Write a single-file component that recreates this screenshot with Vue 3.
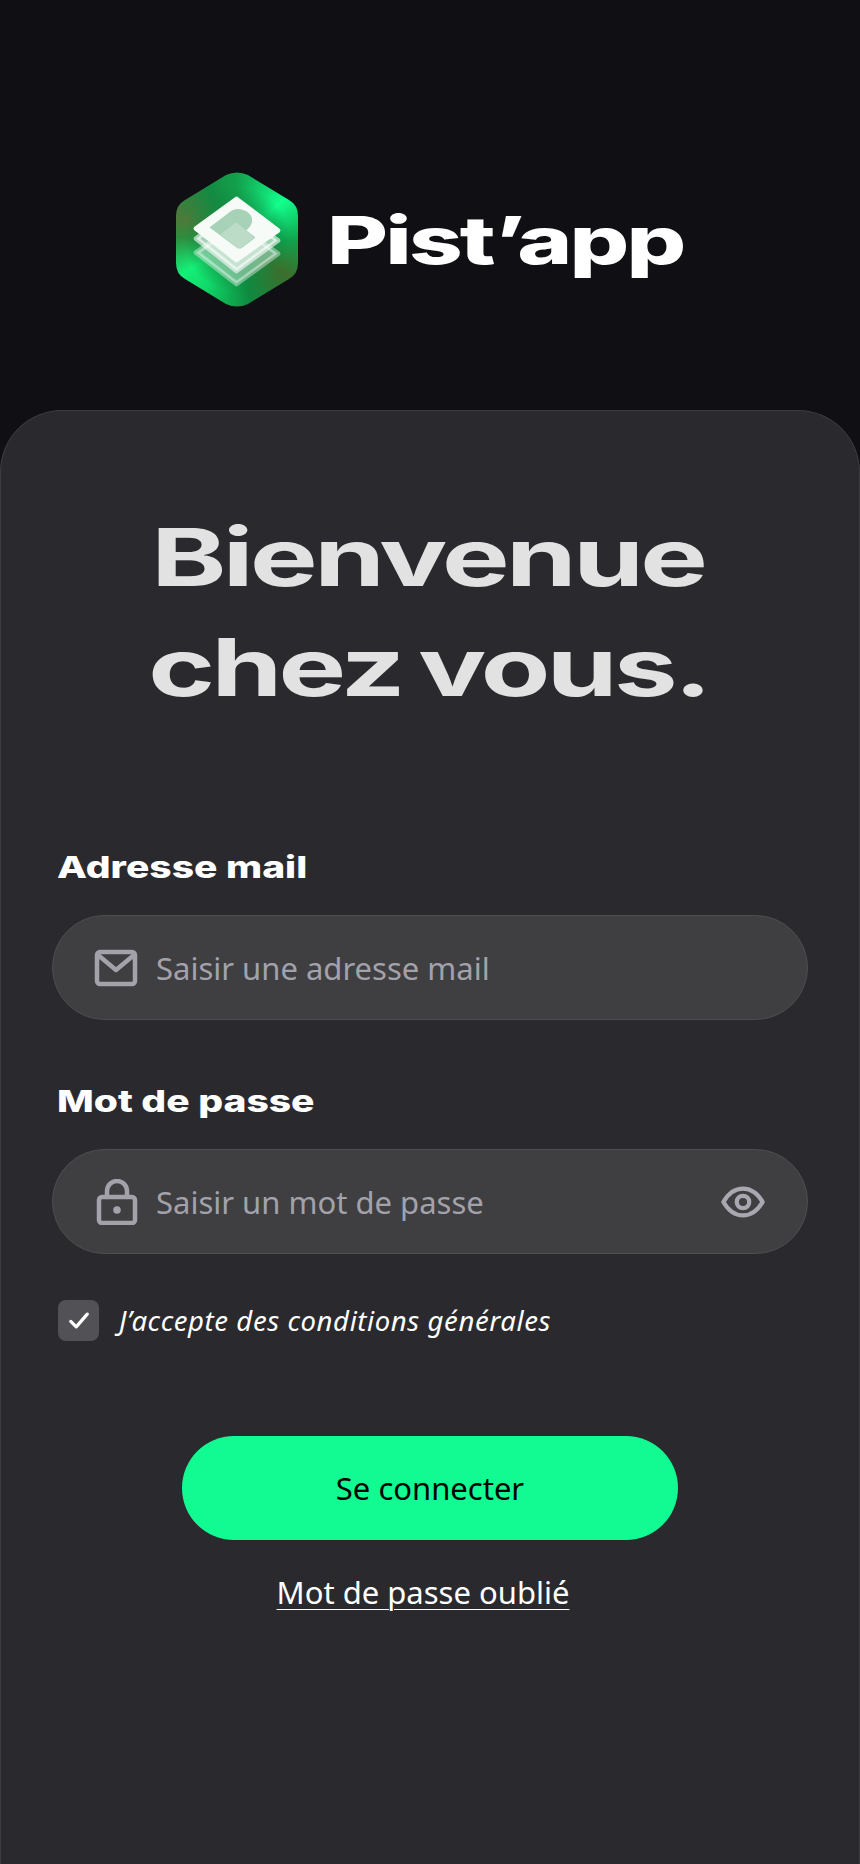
<script setup>
import { ref } from 'vue';

const email = ref('');
const password = ref('');
const accepted = ref(true);
</script>

<template>
  <div class="page">
    <header class="brand">
      <div class="logo">
        <div class="logo-hex"></div>
        <svg class="logo-layers" width="122" height="135" viewBox="0 0 121 134">
          <path d="M20 80 L60 111 L101 81 L60 52 Z" fill="#fff" fill-opacity=".4" stroke="#fff" stroke-opacity=".4" stroke-width="5" stroke-linejoin="round" />
          <path d="M20 66 L60 98 L101 68 L60 38 Z" fill="#fff" fill-opacity=".6" stroke="#fff" stroke-opacity=".6" stroke-width="5" stroke-linejoin="round" />
          <path d="M20 56 L60 27 L101 58 L60 87 Z" fill="#f7fbf8" stroke="#f7fbf8" stroke-width="5" stroke-linejoin="round" />
          <path d="M34 55 L55 39 Q60 36 66 38 Q75 41 75 48 Q75 53 69 58 L78 65 L65 75 Q63 76 61 75 Z" fill="#a8d2b7" stroke="#a8d2b7" stroke-width="1" stroke-linejoin="round" />
          <path d="M44 62 L60 50 L78 65 L65 75 Q63 76 61 75 Z" fill="#bcdcc7" />
        </svg>
      </div>
      <span class="brand-name">Pist’app</span>
    </header>

    <main class="card">
      <h1 class="title">
        <span>Bienvenue</span>
        <span>chez vous.</span>
      </h1>

      <form class="form" @submit.prevent>
        <div class="field">
          <label class="label" for="email"><span>Adresse mail</span></label>
          <div class="input-wrap">
            <svg class="icon" width="44" height="38" viewBox="0 0 44 38" fill="none" stroke="#a3a2ab" stroke-width="4.500" stroke-linecap="round" stroke-linejoin="round">
              <rect x="3" y="3" width="38" height="32" rx="3" />
              <path d="M4 6 L22 21 L40 6" />
            </svg>
            <input class="mail-input" id="email" v-model="email" type="email" placeholder="Saisir une adresse mail" />
          </div>
        </div>

        <div class="field field-pass">
          <label class="label" for="password"><span>Mot de passe</span></label>
          <div class="input-wrap">
            <svg class="icon" width="46" height="46" viewBox="0 0 46 46" fill="none" stroke="#a3a2ab" stroke-width="4.500" stroke-linecap="round" stroke-linejoin="round">
              <rect x="5" y="18" width="36" height="26" rx="3" />
              <path d="M13 18 V12 A10 10 0 0 1 33 12 V18" />
              <circle cx="23" cy="31" r="3.800" fill="#a3a2ab" stroke="none" />
            </svg>
            <input id="password" v-model="password" type="password" placeholder="Saisir un mot de passe" />
            <svg class="eye" width="44" height="34" viewBox="0 0 46 34" fill="none" stroke="#a9a8b0" stroke-width="4.500" stroke-linejoin="round">
              <path d="M2.500 17 C8 7.500 15 3 23 3 C31 3 38 7.500 43.500 17 C38 26.500 31 31 23 31 C15 31 8 26.500 2.500 17 Z" />
              <circle cx="23" cy="17" r="6.500" />
            </svg>
          </div>
        </div>

        <div class="terms" @click="accepted = !accepted">
          <span class="check">
            <svg v-if="accepted" width="22" height="19" viewBox="0 0 24 20" fill="none" stroke="#fff" stroke-width="3.500" stroke-linecap="round" stroke-linejoin="round">
              <path d="M3 11 L9 17 L21 3" />
            </svg>
          </span>
          <span class="terms-text">J’accepte des conditions générales</span>
        </div>

        <div class="actions">
          <button class="submit" type="submit">Se connecter</button>
          <a class="forgot" href="#">Mot de passe oublié</a>
        </div>
      </form>
    </main>
  </div>
</template>

<style>
html,
body {
  margin: 0;
  background: #0f0f14;
}
</style>

<style scoped>
.page {
  height: 1864px;
  display: flex;
  flex-direction: column;
  overflow: hidden;
  background: #0f0f14;
  font-family: "Noto Sans", Lato, sans-serif;
  color: #fff;
}

.brand {
  height: 410px;
  box-sizing: border-box;
  padding: 172px 0 0 176px;
  display: flex;
  align-items: flex-start;
}

.logo {
  display: grid;
  width: 122px;
  height: 135px;
}

.logo-hex,
.logo-layers {
  grid-area: 1 / 1;
}

.logo-layers {
  z-index: 1;
}

.logo-hex {
  width: 122px;
  height: 135px;
  background:
    radial-gradient(circle at 50% 50%, #128a42 0%, #128a42 24%, rgba(16, 130, 60, 0) 58%),
    conic-gradient(from 0deg at 50% 50%, #13a04c 0deg, #12ff8c 50deg, #10a04c 92deg, #3d6e2c 125deg, #0f8a40 168deg, #10d868 212deg, #14f078 238deg, #2f8c3f 272deg, #4c7a3a 290deg, #148a42 330deg, #13a04c 360deg);
  clip-path: path("M50 3 Q61 -2 72 3 L113 28 Q122 33 122 44 L122 91 Q122 102 113 107 L72 132 Q61 137 50 132 L9 107 Q0 102 0 91 L0 44 Q0 33 9 28 Z");
}

.brand-name {
  margin: 32px 0 0 29px;
  display: inline-block;
  font-family: Inter, "Liberation Sans", sans-serif;
  font-size: 66px;
  line-height: 72px;
  font-weight: 800;
  letter-spacing: -2px;
  transform: scaleX(1.42);
  transform-origin: left center;
}

.card {
  flex: 1;
  box-sizing: border-box;
  padding: 91px 51px 0;
  background: #2a2a2e;
  border: 1px solid #3c3c41;
  border-bottom: none;
  border-radius: 62px 62px 0 0;
}

.title {
  margin: 0;
  padding-right: 4px;
  display: flex;
  flex-direction: column;
  align-items: center;
  font-family: Inter, "Liberation Sans", sans-serif;
  font-size: 80px;
  line-height: 110px;
  font-weight: 700;
  letter-spacing: -2.5px;
  word-spacing: -5px;
  color: #e2e2e2;
}

.title span {
  display: block;
  transform: scaleX(1.42);
}

.form {
  margin-top: 127px;
}

.field-pass {
  margin-top: 63px;
}

.label {
  display: block;
  padding-left: 5px;
  font-family: Inter, "Liberation Sans", sans-serif;
  font-size: 30px;
  line-height: 36px;
  font-weight: 800;
}

.label span {
  display: inline-block;
  transform: scaleX(1.3);
  transform-origin: left center;
}

.input-wrap {
  margin-top: 30px;
  height: 105px;
  box-sizing: border-box;
  padding: 0 42px 0 41px;
  display: flex;
  align-items: center;
  background: #3f3f42;
  border: 1px solid #4e4e51;
  border-radius: 53px;
}

.icon {
  flex: none;
}

.input-wrap input {
  flex: 1;
  min-width: 0;
  margin-left: 16px;
  padding: 0;
  border: none;
  outline: none;
  background: transparent;
  font-family: inherit;
  font-size: 31px;
  color: #fff;
}

.input-wrap .mail-input {
  margin-left: 18px;
}

.input-wrap input::placeholder {
  color: #a3a2ab;
  opacity: 1;
}

.eye {
  flex: none;
}

.terms {
  margin: 46px 0 0 6px;
  display: flex;
  align-items: center;
  gap: 20px;
  cursor: pointer;
}

.check {
  width: 41px;
  height: 41px;
  display: flex;
  align-items: center;
  justify-content: center;
  background: #525256;
  border-radius: 8px;
}

.terms-text {
  font-size: 27.5px;
  font-style: italic;
  letter-spacing: 0.6px;
  line-height: 41px;
}

.actions {
  margin-top: 95px;
  display: flex;
  flex-direction: column;
  align-items: center;
}

.submit {
  width: 496px;
  height: 104px;
  border: none;
  border-radius: 52px;
  background: #12fb92;
  font-family: inherit;
  font-size: 31px;
  color: #000;
  cursor: pointer;
}

.forgot {
  margin: 32px 14px 0 0;
  font-size: 31px;
  line-height: 40px;
  color: #fff;
  text-decoration: underline;
  text-decoration-thickness: 1px;
  text-underline-offset: 5px;
}
</style>
